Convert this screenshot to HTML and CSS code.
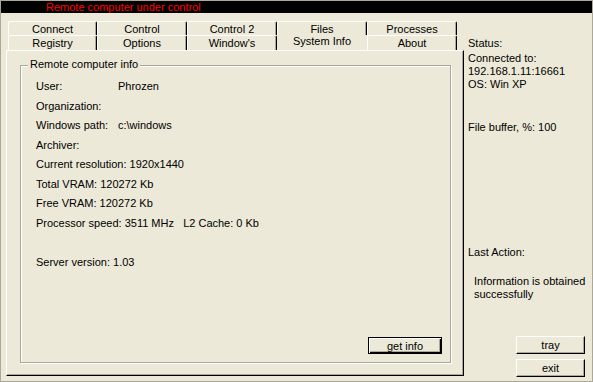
FILE: index.html
```html
<!DOCTYPE html>
<html>
<head>
<meta charset="utf-8">
<link rel="stylesheet" href="styles.css">
</head>
<body>
<div class="window">
  <div class="titlebar">Remote computer under control</div>
  <div class="main">
    <div class="left">
      <div class="tabs">
        <div class="tab">Connect</div>
        <div class="tab">Control</div>
        <div class="tab">Control 2</div>
        <div class="tab">Files</div>
        <div class="tab">Processes</div>
        <div class="tab tab2">Registry</div>
        <div class="tab tab2">Options</div>
        <div class="tab tab2">Window's</div>
        <div class="tab tab2 selected">System Info</div>
        <div class="tab tab2">About</div>
      </div>
      <div class="panel">
        <div class="group">
          <span class="legend">Remote computer info</span>
          <div class="row"><span class="lbl">User:</span>Phrozen</div>
          <div class="row">Organization:</div>
          <div class="row"><span class="lbl">Windows path:</span>c:\windows</div>
          <div class="row">Archiver:</div>
          <div class="row">Current resolution: 1920x1440</div>
          <div class="row">Total VRAM: 120272 Kb</div>
          <div class="row">Free VRAM: 120272 Kb</div>
          <div class="row pre">Processor speed: 3511 MHz   L2 Cache: 0 Kb</div>
          <div class="row"></div>
          <div class="row">Server version: 1.03</div>
          <button class="btn default getinfo">get info</button>
        </div>
      </div>
    </div>
    <div class="side">
      <div class="line status">Status:</div>
      <div class="line conn">Connected to:</div>
      <div class="line">192.168.1.11:16661</div>
      <div class="line">OS: Win XP</div>
      <div class="line buffer">File buffer, %: 100</div>
      <div class="line last">Last Action:</div>
      <div class="line info first">Information is obtained</div>
      <div class="line info">successfully</div>
      <div class="buttons">
        <button class="btn side-btn">tray</button>
        <button class="btn side-btn">exit</button>
      </div>
    </div>
  </div>
</div>
</body>
</html>
```
FILE: styles.css
```css
* { box-sizing: border-box; }
html, body { margin: 0; padding: 0; }
body {
  background: #ece9d8;
  font-family: "Liberation Sans", Arial, sans-serif;
  font-size: 11px;
  color: #000;
}
.window {
  width: 593px;
  height: 382px;
  border: 1px solid #aca899;
  display: flex;
  flex-direction: column;
  background: #ece9d8;
}
.titlebar {
  height: 12px;
  background: #000;
  color: #ff0000;
  line-height: 12px;
  padding-left: 45px;
  white-space: nowrap;
}
.main {
  flex: 1;
  display: flex;
}
.left {
  width: 463px;
  padding-left: 5px;
  padding-top: 8px;
  display: flex;
  flex-direction: column;
}
.tabs {
  margin-left: 2px;
  display: grid;
  grid-template-columns: 89px 90px 90px 90px 90px;
  grid-template-rows: 14px 15px;
}
.tab {
  border-top: 1px solid #fff;
  border-left: 1px solid #fff;
  border-right: 1px solid #000;
  box-shadow: inset -1px 0 0 #aca899;
  border-top-left-radius: 2px;
  border-top-right-radius: 2px;
  text-align: center;
  line-height: 14px;
}
.tab2 { line-height: 15px; }
.tab.selected {
  border: none;
  box-shadow: none;
  line-height: 13px;
  text-align: center;
  margin-left: -1px;
  margin-right: -1px;
}
.panel {
  width: 458px;
  height: 326px;
  border: 1px solid;
  border-color: #fff #000 #000 #fff;
  box-shadow: inset -1px -1px 0 #aca899;
  padding: 14px 0 0 13px;
}
.group {
  position: relative;
  width: 431px;
  height: 298px;
  border: 1px solid #aca899;
  box-shadow: inset 1px 1px 0 #fff, 1px 1px 0 #fff;
  padding: 11px 0 0 15px;
  display: flex;
  flex-direction: column;
}
.legend {
  position: absolute;
  left: 7px;
  top: -8px;
  padding: 0 2px;
  line-height: 13px;
  background: #ece9d8;
}
.row {
  height: 19.5px;
  line-height: 19.5px;
  white-space: nowrap;
}
.pre { white-space: pre; }
.lbl {
  display: inline-block;
  width: 82px;
}
.btn {
  font-family: "Liberation Sans", Arial, sans-serif;
  font-size: 11px;
  color: #000;
  background: #ece9d8;
  border: 1px solid;
  border-color: #fff #000 #000 #fff;
  box-shadow: inset -1px -1px 0 #aca899;
  padding: 0;
  margin: 0;
  line-height: 14px;
}
.btn.default {
  border: 1px solid #000;
  box-shadow: inset 1px 1px 0 #fff, inset -1px -1px 0 #000, inset -2px -2px 0 #aca899;
}
.getinfo {
  margin-top: auto;
  align-self: flex-end;
  margin-right: 8px;
  margin-bottom: 8px;
  width: 74px;
  height: 17px;
}
.side {
  flex: 1;
  display: flex;
  flex-direction: column;
  padding-left: 4px;
  padding-top: 24px;
  padding-bottom: 4px;
}
.line {
  line-height: 13px;
  white-space: nowrap;
}
.conn { margin-top: 2px; }
.buffer { margin-top: 30px; }
.last { margin-top: 112px; }
.info { padding-left: 6px; }
.info.first { margin-top: 16px; }
.buttons {
  margin-top: auto;
  margin-left: 48px;
  display: flex;
  flex-direction: column;
  gap: 5px;
}
.side-btn {
  width: 69px;
  height: 18px;
}
```
